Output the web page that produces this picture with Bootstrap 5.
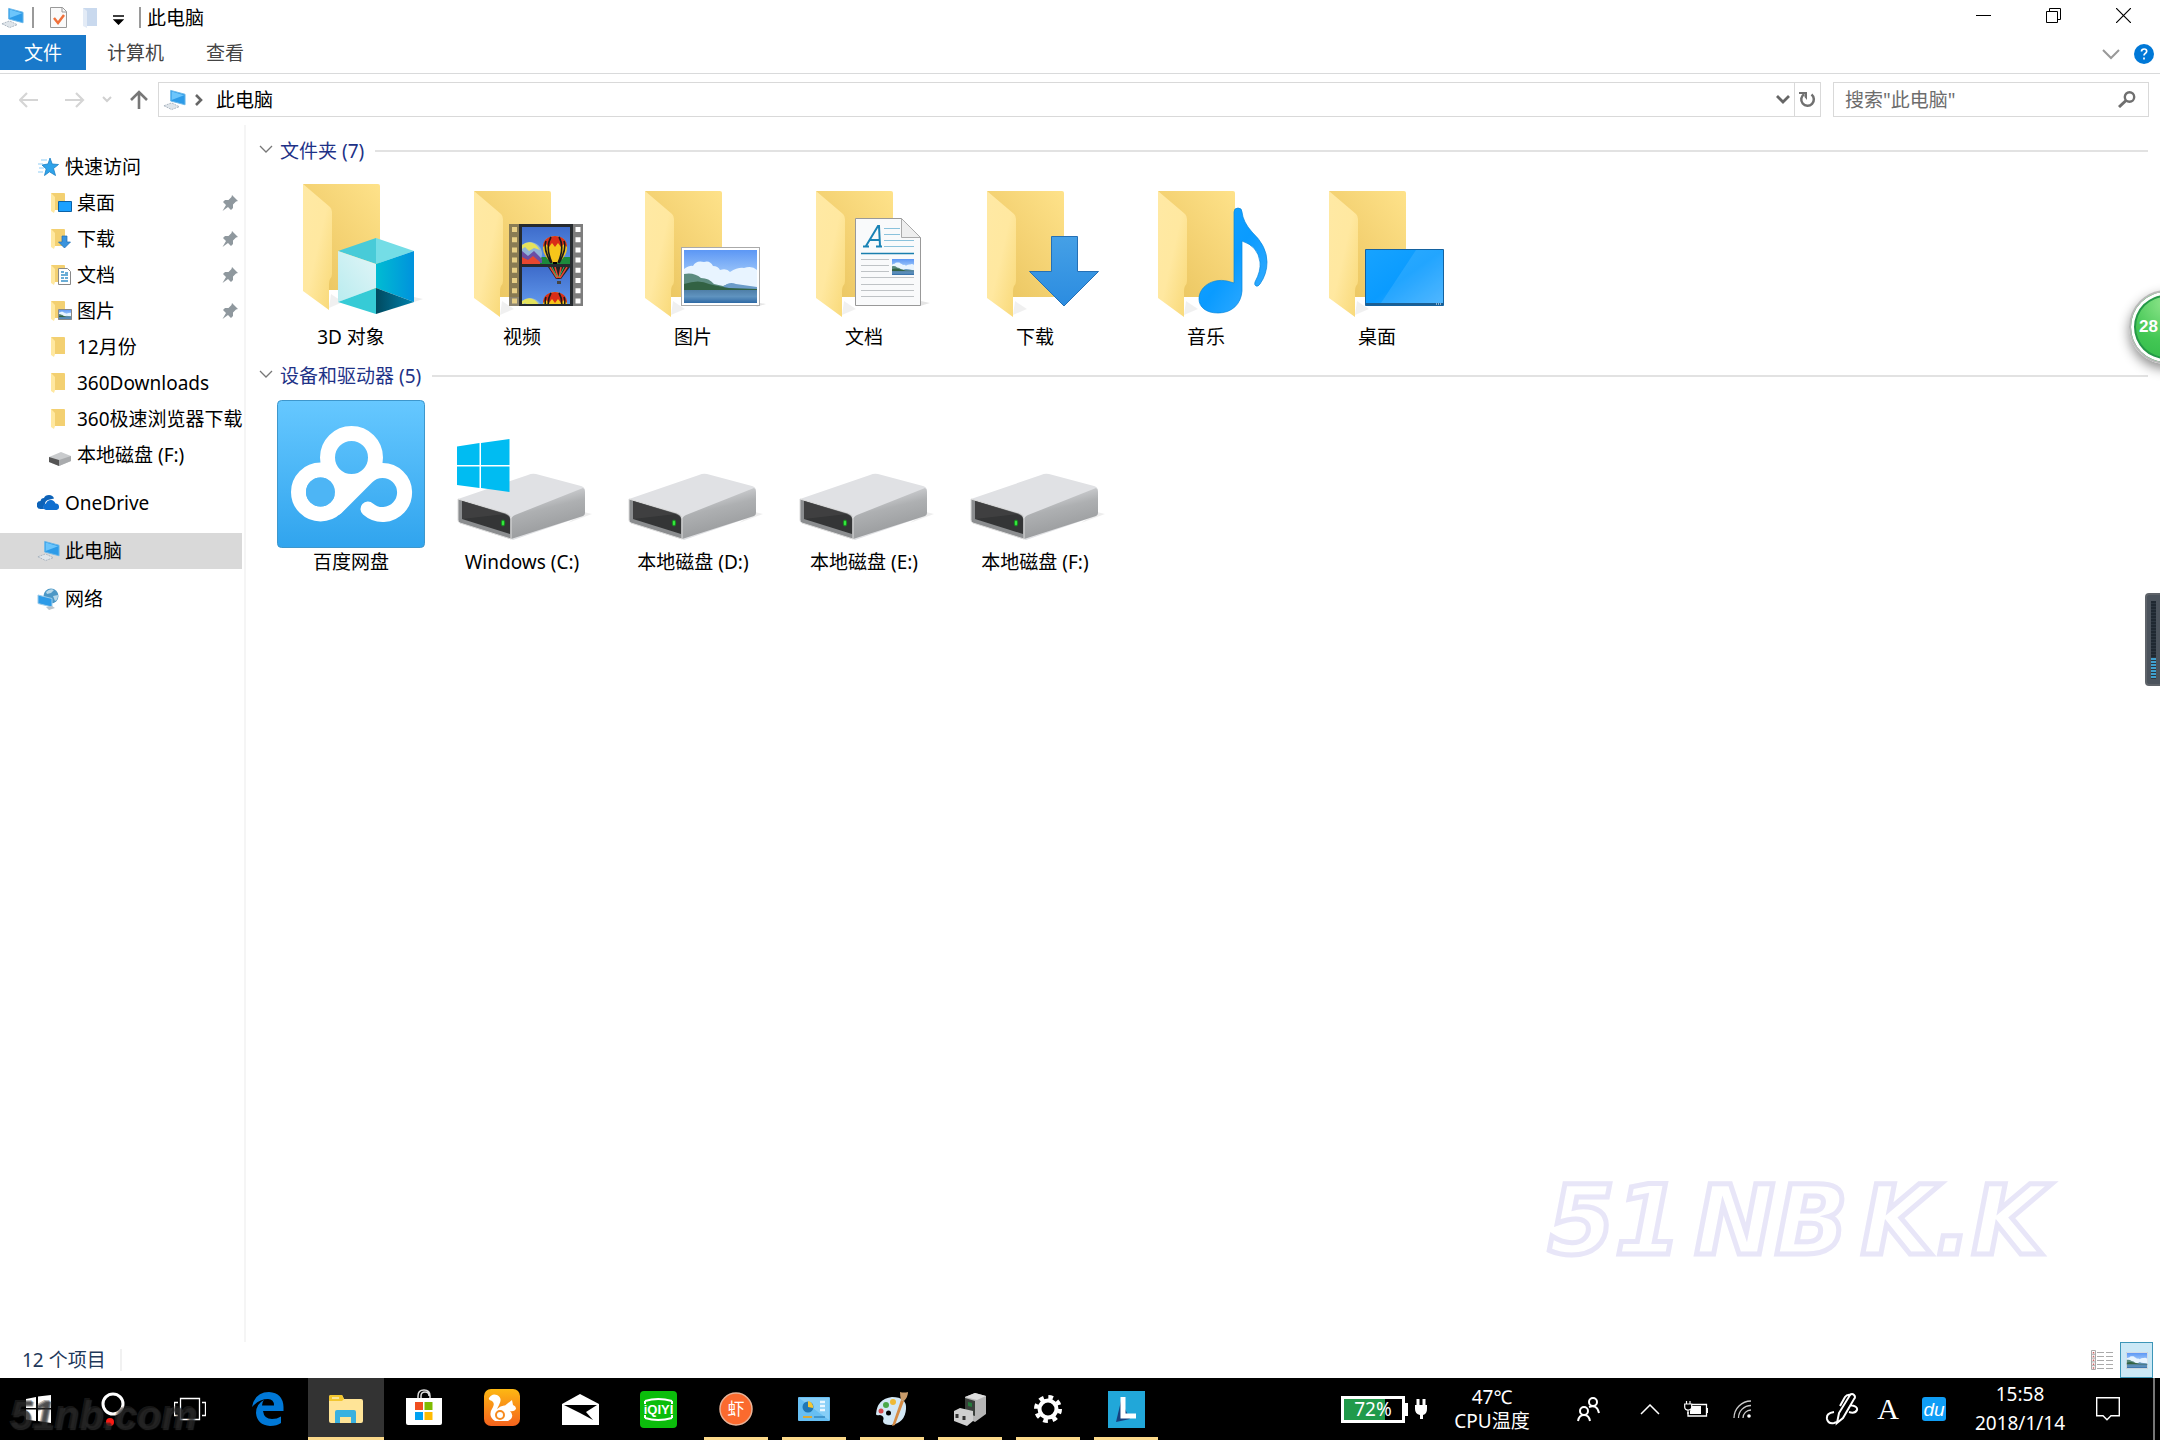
<!DOCTYPE html>
<html lang="zh-CN">
<head>
<meta charset="utf-8">
<meta name="viewport" content="width=device-width, initial-scale=1">
<title>此电脑</title>
<link href="https://cdn.jsdelivr.net/npm/bootstrap@5.3.0/dist/css/bootstrap.min.css" rel="stylesheet">
<style>
body{font-family:"Noto Sans","Noto Sans CJK SC",sans-serif;font-size:19px;line-height:28px;color:#000;background:#fff;overflow:hidden}
button,input{font:inherit;color:inherit;background:none;border:0;padding:0;border-radius:0}
a{color:inherit;text-decoration:none}
svg{display:block;flex:none}
.shell{min-height:100vh}
.titlebar{height:35px;padding-left:1px}
.quick{margin-left:15px}
.vbar{width:2px;height:21px;background:#9a9a9a}
.title-gap{margin-right:6px}
.winbtn{width:70px;height:32px;display:flex;align-items:center;justify-content:center}
.winctl{margin-right:2px}
.ribbon{height:39px;border-bottom:1px solid #d9dadb;color:#444}
.tab-file{width:86px;height:35px;background:#1979ca;color:#fff}
.tab-item{height:35px;padding:0 21px}
.ribbon-end{gap:14px;padding-right:6px}
.addr-row{padding:8px 11px 0 19px}
.go-up{margin-right:9px}
.addr-box{height:35px;border:1px solid #d9d9d9}
.search-box{width:316px;height:35px;border:1px solid #d9d9d9;margin-left:12px;padding:0 12px 0 11px;color:#6d6d6d}
.search-box input{outline:0;min-width:0}
.search-box input::placeholder{color:#6d6d6d;opacity:1}
.refresh{width:26px;height:33px;border-left:1px solid #d9d9d9}
.side{width:242px;padding-top:32px}
.side a{height:36px;display:flex;align-items:center;padding-left:37px;gap:5px;white-space:nowrap}
.side .sub{padding-left:49px;gap:4px}
.side .group-start{margin-top:12px}
.side .current{background:#d9d9d9}
.split{width:2px;background:#f5f5f5;margin:8px 12px 0 2px}
.group-head{height:36px;color:#1e3287;gap:7px;padding-left:1px}
.group-head hr{height:2px;background:#e2e2e2;border:0;opacity:1;margin:0 0 0 4px}
.tiles{gap:23px;margin:6px 0 7px 19px}
.tile{width:148px;display:block;text-align:center;white-space:nowrap}
.statusbar{height:36px;padding:0 7px 0 22px;color:#1e395b;gap:6px}
.stat-sep{width:2px;height:22px;background:#f1f1f1;margin-left:8px}
.view-on{width:33px;height:36px;background:#cbe8f6;border:1px solid #3d96b8;display:flex;align-items:center;justify-content:center}
.taskbar{height:62px;background:#000;color:#fff}
.pins{gap:2px;margin-left:2px}
.tb{width:76px;height:62px;display:flex;align-items:center;justify-content:center;position:relative}
.tb.on{background:#333}
.tb.run::after{content:"";position:absolute;left:6px;right:6px;bottom:0;height:3px;background:#fbd98a}
.tb.on::after{left:0;right:0}
.tray{width:46px;height:62px;display:flex;align-items:center;justify-content:center}
.tray-mid{margin:0 54px 0 16px}
.tray-note{width:50px;margin-right:20px}
.ime{font:30px/62px "Liberation Serif",serif}
.cpu{width:110px;line-height:24px;text-align:center;margin-right:18px}
.clock{width:126px;line-height:29px;text-align:center}
.peek{width:7px;height:62px;border-left:2px solid #777}
.batt{width:64px;height:27px;border:3px solid #fff;position:relative;line-height:21px;text-align:center;background:linear-gradient(90deg,#219a4b 70%,#000 70%)}
.batt::after{content:"";position:absolute;right:-6px;top:4px;width:3px;height:13px;background:#fff}
.float-ball{position:absolute;right:-43px;top:290px;width:74px;height:74px;border-radius:50%;border:2px solid #b9b9b9;background:radial-gradient(circle at 50% 15%,#8fe58c,#43c754 55%,#2fb848);box-shadow:inset 0 0 0 3px #fff,inset 0 0 0 5px #249848,0 5px 12px rgba(0,0,0,.45);color:#fff;font:bold 17px/70px "Liberation Sans",sans-serif;text-align:left;padding-left:8px}
.float-meter{position:absolute;right:0;top:593px;width:15px;height:93px;border-radius:4px 0 0 4px;background:#4b535c;border:2px solid #5e6369;border-right:0}
.float-meter::before{content:"";position:absolute;left:4px;top:6px;width:5px;height:78px;background:repeating-linear-gradient(#1f2831 0 2px,#2c3640 2px 3px)}
.float-meter::after{content:"";position:absolute;left:4px;bottom:5px;width:5px;height:21px;background:repeating-linear-gradient(#3fa0cf 0 2px,#2c3640 2px 3px)}
.wall-mark{position:absolute;right:114px;bottom:164px;width:498px;font:italic bold 96px/110px "DejaVu Sans",sans-serif;color:#fff;-webkit-text-stroke:5px #e8e6f8;pointer-events:none}
.corner-mark{position:absolute;left:10px;bottom:4px;font:italic bold 40px/42px "Liberation Sans",sans-serif;color:rgba(20,20,20,.35);text-shadow:1px 1px 1px rgba(60,60,60,.6),-1px -1px 0 rgba(60,60,60,.4);pointer-events:none}
</style>
<script src="https://cdn.jsdelivr.net/npm/bootstrap@5.3.0/dist/js/bootstrap.bundle.min.js"></script>
</head>
<body>
<svg width="0" height="0" class="position-absolute" aria-hidden="true">
<defs>
<linearGradient id="gBack" x1="0" y1="1" x2="1" y2="0"><stop offset="0" stop-color="#e8c35c"/><stop offset=".5" stop-color="#f4d273"/><stop offset="1" stop-color="#fee28a"/></linearGradient>
<linearGradient id="gFlap" x1="0" y1="0" x2="1" y2="1"><stop offset="0" stop-color="#ffe9a4"/><stop offset=".5" stop-color="#ffe8a0"/><stop offset="1" stop-color="#f8d876"/></linearGradient>
<linearGradient id="gSky" x1="0" y1="0" x2="0" y2="1"><stop offset="0" stop-color="#5c97f5"/><stop offset="1" stop-color="#c7e5fc"/></linearGradient>
<linearGradient id="gSea" x1="0" y1="0" x2="0" y2="1"><stop offset="0" stop-color="#4f7fa8"/><stop offset=".5" stop-color="#5f93bf"/><stop offset="1" stop-color="#2f6aa5"/></linearGradient>
<linearGradient id="gBlue" x1="0" y1="0" x2="1" y2="1"><stop offset="0" stop-color="#17a3ff"/><stop offset=".5" stop-color="#0a9bff"/><stop offset="1" stop-color="#3fb0ff"/></linearGradient>
<linearGradient id="gPan" x1="0" y1="0" x2="0" y2="1"><stop offset="0" stop-color="#66c8ff"/><stop offset="1" stop-color="#30a4ee"/></linearGradient>
<linearGradient id="gCubeR" x1="0" y1="0" x2="1" y2="0"><stop offset="0" stop-color="#00bcd2"/><stop offset="1" stop-color="#0092dd"/></linearGradient>
<linearGradient id="gCubeL" x1="0" y1="1" x2="1" y2="0"><stop offset="0" stop-color="#b9ecef"/><stop offset="1" stop-color="#e2f5f7"/></linearGradient>
<linearGradient id="gCubeB" x1="0" y1="0" x2="1" y2="0"><stop offset="0" stop-color="#00495f"/><stop offset="1" stop-color="#0082ad"/></linearGradient>
<linearGradient id="gSide" x1="0" y1="0" x2=".35" y2="1"><stop offset=".1" stop-color="#e0e1e4"/><stop offset=".5" stop-color="#aeb0b2"/><stop offset="1" stop-color="#97999b"/></linearGradient>
<linearGradient id="gArrow" x1="0" y1="0" x2="0" y2="1"><stop offset="0" stop-color="#45a0e6"/><stop offset="1" stop-color="#2b8ce0"/></linearGradient>
<linearGradient id="gFilm" x1="0" y1="0" x2="0" y2="1"><stop offset="0" stop-color="#3e6ccb"/><stop offset="1" stop-color="#5f96ea"/></linearGradient>
<linearGradient id="gUc" x1="0" y1="0" x2="0" y2="1"><stop offset="0" stop-color="#fdb813"/><stop offset="1" stop-color="#f5621d"/></linearGradient>
<symbol id="folder" viewBox="0 0 148 148"><path d="M52 140l14-6-12-8z" fill="#000" opacity=".06"/><path d="M26 16h75q2 0 2 2v104H52z" fill="url(#gBack)"/><path d="M26 16l27 23q2 2 2 5v62q0 3-2 5-1 2-1 5v26L26 123z" fill="url(#gFlap)"/></symbol>
<symbol id="sfolder" viewBox="0 0 22 22"><path d="M2 1h13q1 0 1 1v16H5z" fill="#f3d071"/><path d="M2 1l4 4v13l-1 3-3-2z" fill="#ffe8a0"/></symbol>
<symbol id="pc" viewBox="0 0 24 22"><path d="M8 1l15 4v11L8 12z" fill="#2d9be8" stroke="#6bb7e8"/><path d="M9 2l13 4L9 11z" fill="#6cc5fb"/><path d="M1 17l8-3 8 4-8 3z" fill="#dfe5ea" stroke="#a9b4bf" stroke-dasharray="2 1"/></symbol>
<symbol id="drive" viewBox="0 0 148 148"><path d="M136 112l8 2-24 9z" fill="#000" opacity=".07"/><path d="M10 99L80 75q4-2 8-1l45 12q4 1 4 5v22q0 2-2 3l-70 24-3-1-49-16q-3-1-3-3z" fill="#e0e1e4"/><path d="M63 139v-19q0-3 4-5l68-27q2 1 2 4v21q0 2-2 3z" fill="url(#gSide)"/><path d="M10 99l48 14q5 2 5 6v20L12 123q-2-1-2-3z" fill="#8b8d8f" stroke="#ddd" stroke-width="1"/><path d="M14 101l43 13q5 2 5 5v15L14 119z" fill="#343536"/><path d="M14 101l43 13-43 5z" fill="#454545" opacity=".7"/><ellipse cx="55" cy="123" rx="1.700" ry="3" fill="#35e83e" stroke="#178b1e"/></symbol>
<symbol id="pin" viewBox="0 0 16 16"><path d="M10 0l6 6-2 .5-3 3v3.500L9 15 6 12l-5.500 4L4 10 1 7l2-2h3.500l3-3z" fill="#8f989e"/></symbol>
<symbol id="chev" viewBox="0 0 14 8"><path d="M1 1l6 6 6-6" fill="none" stroke="#777" stroke-width="1.300"/></symbol>
<symbol id="scene" viewBox="0 0 79 59" preserveAspectRatio="none"><rect x=".5" y=".5" width="78" height="58" fill="#fff" stroke="#aaa"/><path d="M3 3h73v40H3z" fill="url(#gSky)"/><path d="M3 42V22q6-4 9-3 3-6 11-4 6-2 9 4 5 0 7 4 7-2 10 2 8-5 14-4 8-3 13 2v19z" fill="#e8f4ff"/><path d="M3 42V27q10-2 17 4 8 0 13 6l9 2q8-4 14 0 8-1 20 3v1z" fill="#5b8b7f"/><path d="M42 40q6-6 13-3l21 3v3H42z" fill="#6c9cc9"/><path d="M3 43V37q15-5 25 0 8 2 20 4l28 1v2H3z" fill="#326243"/><path d="M3 43h73v13H3z" fill="url(#gSea)"/></symbol>
</defs>
</svg>

<div class="shell d-flex flex-column position-relative overflow-hidden">
<header>
<div class="titlebar d-flex align-items-center">
<svg width="23" height="22"><use href="#pc"/></svg>
<span class="vbar ms-2"></span>
<button class="quick" aria-label="属性"><svg width="19" height="23" viewBox="0 0 19 23"><path d="M1.500 1.500h12l4 4v16h-16z" fill="#fafafa" stroke="#999"/><path d="M13 1.500V6h4.500" fill="none" stroke="#999"/><path d="M5 12l4 5 6-8" fill="none" stroke="#f0703a" stroke-width="2.500"/></svg></button>
<button class="quick" aria-label="新建文件夹"><svg width="15" height="22" viewBox="0 0 15 22"><path d="M0 1h14v18H3z" fill="#c9d9ee"/><path d="M0 1l4 3v17l-4-2z" fill="#e3ebf6"/></svg></button>
<button class="quick" aria-label="自定义快速访问工具栏"><svg class="mt-1" width="11" height="10" viewBox="0 0 11 10"><path d="M0 1h11M1.500 5h8L5.500 9z" fill="#000" stroke="#000" stroke-width="1.500"/></svg></button>
<span class="vbar quick title-gap"></span>
<span>此电脑</span>
<div class="winctl d-flex ms-auto mb-1">
<button class="winbtn" aria-label="最小化"><svg width="15" height="15"><path d="M0 7.500h15" stroke="#000"/></svg></button>
<button class="winbtn" aria-label="还原"><svg width="15" height="15" fill="none" stroke="#000"><path d="M.5 3.500h11v11H.5zM3.500 3.500v-3h11v11h-3"/></svg></button>
<button class="winbtn" aria-label="关闭"><svg width="15" height="15"><path d="M0 0l15 15M15 0L0 15" stroke="#000" stroke-width="1.200"/></svg></button>
</div>
</div>
<nav class="ribbon d-flex align-items-start">
<button class="tab-file">文件</button>
<button class="tab-item">计算机</button>
<button class="tab-item">查看</button>
<div class="ribbon-end d-flex align-items-center ms-auto h-100">
<button aria-label="展开功能区"><svg width="18" height="11" viewBox="0 0 18 11"><path d="M1 1l8 8 8-8" fill="none" stroke="#999" stroke-width="2"/></svg></button>
<button aria-label="帮助"><svg width="20" height="20" viewBox="0 0 20 20"><circle cx="10" cy="10" r="10" fill="#0078d7"/><path d="M7.500 7.500q0-2.500 2.700-2.500 2.500 0 2.500 2.300 0 1.300-1.500 2.200-1.200.8-1.200 2M10 13.500v2" fill="none" stroke="#fff" stroke-width="1.700"/></svg></button>
</div>
</nav>
<div class="addr-row d-flex align-items-center">
<button aria-label="后退"><svg width="20" height="16" viewBox="0 0 20 16"><path d="M19 8H2M8 1L1 8l7 7" fill="none" stroke="#d5d5d5" stroke-width="2.200"/></svg></button>
<button class="ms-4" aria-label="前进"><svg width="22" height="16" viewBox="0 0 22 16"><path d="M2 8h17M13 1l7 7-7 7" fill="none" stroke="#d5d5d5" stroke-width="2.200"/></svg></button>
<button class="ms-3 me-3" aria-label="最近位置"><svg width="12" height="8" viewBox="0 0 12 8"><path d="M2 1l4 4 4-4" fill="none" stroke="#d0d0d0" stroke-width="2"/></svg></button>
<button class="go-up" aria-label="上移"><svg width="20" height="20" viewBox="0 0 20 20"><path d="M10 19V3M2 10l8-8 8 8" fill="none" stroke="#777" stroke-width="2.600"/></svg></button>
<div class="addr-box d-flex align-items-center flex-grow-1 ps-1">
<svg width="23" height="22"><use href="#pc"/></svg>
<svg class="mx-2" width="10" height="12" viewBox="0 0 10 12"><path d="M2 1l5 5-5 5" fill="none" stroke="#666" stroke-width="2.600"/></svg>
<a href="#" class="ms-1">此电脑</a>
<button class="ms-auto me-1" aria-label="以前的位置"><svg width="14" height="10" viewBox="0 0 14 10"><path d="M1 1l6 6 6-6" fill="none" stroke="#666" stroke-width="2.800"/></svg></button>
<button class="refresh d-flex align-items-center justify-content-center" aria-label="刷新"><svg width="17" height="17" viewBox="0 0 17 17"><path d="M5 3.200a6.300 6.300 0 1 0 7.500.3" fill="none" stroke="#707070" stroke-width="2.500"/><path d="M0 1h8v8L5.500 6V3H0z" fill="#707070"/></svg></button>
</div>
<div class="search-box d-flex align-items-center">
<input class="flex-grow-1" type="search" aria-label="搜索" placeholder="搜索&quot;此电脑&quot;">
<svg width="18" height="17" viewBox="0 0 18 17"><circle cx="11.500" cy="6" r="4.700" fill="none" stroke="#6f6f6f" stroke-width="2.400"/><path d="M8 9.500L1 16" stroke="#6f6f6f" stroke-width="3"/></svg>
</div>
</div>
</header>

<main class="d-flex flex-grow-1">
<nav class="side flex-shrink-0">
<a href="#"><svg width="23" height="22" viewBox="0 0 23 22"><path d="M13 2l2.200 6 6.300.500-5 4 2 7-6-3.700-5 3.700 1.700-6.500L5 9l6-1z" fill="#2fa3ea" stroke="#1b7fc4" stroke-width=".8"/><path d="M4 4h6M1 8h5M2 12h5M1 16h5" stroke="#8fcdf5"/></svg><span>快速访问</span></a>
<a href="#" class="sub"><svg width="24" height="22" viewBox="0 0 24 22"><use href="#sfolder" width="22" height="22"/><path d="M9.500 9.500h13v10h-13z" fill="#1ba1ff" stroke="#0b62a8"/></svg><span>桌面</span><svg class="ms-auto me-1" width="16" height="16"><use href="#pin"/></svg></a>
<a href="#" class="sub"><svg width="24" height="22" viewBox="0 0 24 22"><use href="#sfolder" width="22" height="22"/><path d="M13 8h5v6h3.500l-6 6-6-6H13z" fill="#3a93dd" stroke="#1f6fb5" stroke-width=".7"/></svg><span>下载</span><svg class="ms-auto me-1" width="16" height="16"><use href="#pin"/></svg></a>
<a href="#" class="sub"><svg width="24" height="22" viewBox="0 0 24 22"><use href="#sfolder" width="22" height="22"/><path d="M9.500 4.500h9l3 3v13h-12z" fill="#fff" stroke="#888"/><path d="M12 8h3M16 9h3M12 11h7M12 14h3M12 17h7M16 14h3" stroke="#3a93c9" stroke-width="1.300"/></svg><span>文档</span><svg class="ms-auto me-1" width="16" height="16"><use href="#pin"/></svg></a>
<a href="#" class="sub"><svg width="24" height="22" viewBox="0 0 24 22"><use href="#sfolder" width="22" height="22"/><svg x="9" y="9" width="14" height="11"><use href="#scene"/></svg><path d="M9.500 9.500h13v10h-13z" fill="none" stroke="#888"/></svg><span>图片</span><svg class="ms-auto me-1" width="16" height="16"><use href="#pin"/></svg></a>
<a href="#" class="sub"><svg width="24" height="22"><use href="#sfolder" width="22" height="22"/></svg><span>12月份</span></a>
<a href="#" class="sub"><svg width="24" height="22"><use href="#sfolder" width="22" height="22"/></svg><span>360Downloads</span></a>
<a href="#" class="sub"><svg width="24" height="22"><use href="#sfolder" width="22" height="22"/></svg><span>360极速浏览器下载</span></a>
<a href="#" class="sub"><svg width="24" height="22" viewBox="0 0 24 22"><path d="M0 13l12-5 10 4v5l-12 5-10-4z" fill="#c9cbcd"/><path d="M0 13l10 3v6L0 18z" fill="#555"/><path d="M10 16l12-4v5l-12 5z" fill="#a9abad"/></svg><span>本地磁盘 (F:)</span></a>
<a href="#" class="group-start"><svg width="23" height="22" viewBox="0 0 23 22"><path d="M7 17H4a4 4 0 0 1-.5-8Q4 6 7 6q1-3 5-3 4 0 5 3.500l-4 1Q8 8 8 12q-2 2-1 5z" fill="#0c62b8"/><path d="M9 18a3.300 3.300 0 0 1 0-6.500Q10 8 14 8q3 0 4.500 3.500a3.300 3.300 0 0 1 1 6.500z" fill="#0f6fd0"/></svg><span>OneDrive</span></a>
<a href="#" class="group-start current"><svg width="23" height="22"><use href="#pc"/></svg><span>此电脑</span></a>
<a href="#" class="group-start"><svg width="23" height="22" viewBox="0 0 23 22"><circle cx="14" cy="8" r="7.500" fill="#4b97c6"/><path d="M9 4q4-4 8-2l-3 3-4 1zM16 8l5-1q0 5-3 6z" fill="#b5d7e9"/><path d="M1 7l14 3.500V19L1 15.500z" fill="#2d9be8" stroke="#9acbea"/><path d="M9 19l6-1 3 2-6 2z" fill="#b9c4cc"/></svg><span>网络</span></a>
</nav>
<div class="split"></div>
<section class="flex-grow-1 pt-3">
<div class="group-head d-flex align-items-center me-2 pe-1"><svg class="mb-1" width="14" height="8"><use href="#chev"/></svg><span>文件夹 (7)</span><hr class="flex-grow-1"></div>
<div class="tiles d-flex flex-wrap">
<a href="#" class="tile"><svg width="148" height="148" viewBox="0 0 148 148"><use href="#folder" y="-7" width="148" height="148"/><path d="M137 122l9 2-30 10z" opacity=".08"/><path d="M99 63v26L61 76z" fill="#48cbd8"/><path d="M99 63l38 13-38 13z" fill="#74dde6"/><path d="M61 76l38 13v24l-38 14z" fill="url(#gCubeL)"/><path d="M137 76L99 89v24l38 14z" fill="url(#gCubeR)"/><path d="M61 127l38-14v26z" fill="#36cbd6"/><path d="M137 127l-38-14v26z" fill="url(#gCubeB)"/></svg>3D 对象</a>
<a href="#" class="tile"><svg width="148" height="148" viewBox="0 0 148 148"><use href="#folder" width="148" height="148"/>
<path d="M61 49h10v82H61z" fill="#6e654c" opacity=".8"/><path d="M125 49h10v82h-10z" fill="#7d7d7d"/><path d="M71 49h54v82H71z" fill="#262a2e"/><path d="M66.500 52v78" stroke="#e8cf85" stroke-width="5" stroke-dasharray="5 5.200"/><path d="M130 52v78" stroke="#fff" stroke-width="5" stroke-dasharray="5 5.200"/>
<svg x="74" y="52" width="48" height="37" viewBox="0 0 48 37" overflow="hidden"><path d="M0 0h48v37H0z" fill="url(#gFilm)"/><path d="M16 30h32v7H16z" fill="#1c8a3c"/><g id="balloons"><circle cx="8" cy="27" r="12" fill="#8fb4d8"/><path d="M0 18q8-6 15 1l3 4-6-2-5 3-4-4-3 2z" fill="#e4e25c"/><path d="M0 24l6 5 6-5 8 8v4H0z" fill="#6a4fa5"/><path d="M0 30l6 3 5-4 7 6v5H0z" fill="#e8472f"/><path d="M33 9q12 1 12 12 0 8-9 15h-6q-9-7-9-15Q21 10 33 9z" fill="#f6c51b"/><path d="M33 9q-12 1-12 11l3-3 3 3 3-4 3 4 3-4 3 4 3-3 3 3Q45 10 33 9z" fill="#d92d18"/><path d="M29 10q-6 10 1 26M37 10q6 10-1 26M24 14q-3 8 5 22M42 14q3 8-5 22" stroke="#1b1b1b" stroke-width="1.600" fill="none"/><path d="M31 35h4v3h-4z"/></g></svg>
<svg x="74" y="92" width="48" height="37" viewBox="0 0 48 37" overflow="hidden"><path d="M0 0h48v37H0z" fill="url(#gFilm)"/><path d="M26 0h22l-9 12h-5z" fill="#222"/><path d="M28 0l7 11M33 0l3 11M39 0l-2 11M45 0l-7 11" stroke="#e8472f" stroke-width="1.500"/><path d="M30 0l5 10M42 0l-5 10" stroke="#36c26e"/><path d="M35 14h4v3h-4z" fill="#444"/><use href="#balloons" y="16"/></svg>
</svg>视频</a>
<a href="#" class="tile"><svg width="148" height="148" viewBox="0 0 148 148"><use href="#folder" width="148" height="148"/><path d="M141 128l6 1-10 3z" opacity=".1"/><use href="#scene" x="62" y="72" width="79" height="59"/></svg>图片</a>
<a href="#" class="tile"><svg width="148" height="148" viewBox="0 0 148 148"><use href="#folder" width="148" height="148"/><path d="M131 126l9 2-10 3z" opacity=".1"/><path d="M65.500 43.500h46l19 19v68h-65z" fill="#f9fafb" stroke="#999"/><path d="M111.500 43.500v19h19z" fill="#eee" stroke="#aaa"/><path d="M76 71l12-20h1l1 20M80 65h9M73 71.500h6M86 71.500h6" fill="none" stroke="#1a83b5" stroke-width="2"/><path d="M94 53.500h16M94 59.500h16M94 65.500h30M94 71.500h30" stroke="#8ac2dc" stroke-width="1.200"/><path d="M71 78.500h53" stroke="#1a7fae" stroke-width="1.500"/><path d="M71 84.500h28M71 90.500h28M71 96.500h28M71 102.500h53M71 109.500h53M71 115.500h53M71 121.500h53" stroke="#bfc3c6"/><svg x="102" y="84" width="22" height="16" viewBox="3 3 73 53" preserveAspectRatio="none"><use href="#scene" width="79" height="59"/></svg></svg>文档</a>
<a href="#" class="tile"><svg width="148" height="148" viewBox="0 0 148 148"><use href="#folder" width="148" height="148"/><path d="M90.500 61.500h26v35h21L103 131 68.500 96.500h22z" fill="url(#gArrow)" stroke="#2570b5"/></svg>下载</a>
<a href="#" class="tile"><svg width="148" height="148" viewBox="0 0 148 148"><use href="#folder" width="148" height="148"/><path d="M102 37q0-4 4-4t4 4q1 10 10 20 15 14 15 30 0 12-7 22-2 3-4 2t-1-4q6-11 5-20-2-16-18-21v50c-1 13-10 22-24 22-12 0-19-6-19-14 0-12 13-21 28-18l7 2z" fill="url(#gBlue)" stroke="#0787dd" stroke-width=".7"/></svg>音乐</a>
<a href="#" class="tile"><svg width="148" height="148" viewBox="0 0 148 148"><use href="#folder" width="148" height="148"/><path d="M62.500 74.500h78v56h-78z" fill="url(#gBlue)" stroke="#1462a0"/><path d="M113 75h27v53H78z" fill="#fff" opacity=".1"/><path d="M63 128h77v2H63z" fill="#1b5f93"/><path d="M133 129h6" stroke="#fff" stroke-dasharray="1 1"/></svg>桌面</a>
</div>
<div class="group-head d-flex align-items-center me-2 pe-1"><svg class="mb-1" width="14" height="8"><use href="#chev"/></svg><span>设备和驱动器 (5)</span><hr class="flex-grow-1"></div>
<div class="tiles d-flex flex-wrap">
<a href="#" class="tile"><svg width="148" height="148" viewBox="0 0 148 148"><rect x=".5" y=".5" width="147" height="147" rx="4" fill="url(#gPan)" stroke="#3e97cc"/><g fill="none" stroke="#fff" stroke-width="15"><circle cx="74.500" cy="57.500" r="24"/><circle cx="43.500" cy="92" r="22"/><path d="M59 108l31-31a22 22 0 1 1 1 32" stroke-linecap="round"/></g><path d="M52 72l22 12 22-12-4 11-24 25-10-10z" fill="#fff"/><circle cx="43.500" cy="92" r="14.500" fill="#4db5f5"/></svg>百度网盘</a>
<a href="#" class="tile"><svg width="148" height="148" viewBox="0 0 148 148"><use href="#drive" width="148" height="148"/><path d="M9 42.500L31.500 43v22H9z" fill="none"/><path d="M9 46.500L31.500 43v22H9zM33 43l28.500-4v26H33zM9 66.500h22.500V88L9 85zM33 66.500h28.500V92L33 88z" fill="#00bcf2"/></svg>Windows (C:)</a>
<a href="#" class="tile"><svg width="148" height="148"><use href="#drive"/></svg>本地磁盘 (D:)</a>
<a href="#" class="tile"><svg width="148" height="148"><use href="#drive"/></svg>本地磁盘 (E:)</a>
<a href="#" class="tile"><svg width="148" height="148"><use href="#drive"/></svg>本地磁盘 (F:)</a>
</div>
</section>
</main>

<div class="statusbar d-flex align-items-center">
<span>12 个项目</span><span class="stat-sep"></span>
<button class="ms-auto" aria-label="详细信息"><svg width="24" height="22" viewBox="0 0 24 22"><path d="M1.500 1.500h4v19h-4zM1.500 5.300h4M1.500 9.100h4M1.500 12.900h4M1.500 16.700h4" fill="#fff" stroke="#aaa"/><path d="M3.500 3v17" stroke="#c66" stroke-dasharray="1.500 2.300" stroke-width="1.500"/><path d="M7 3.500h16M7 7.500h16M7 11.500h16M7 15.500h16M7 19.500h16" stroke="#aaa" stroke-dasharray="7 2"/></svg></button>
<button class="view-on" aria-label="大图标"><svg width="22" height="17"><use href="#scene"/></svg></button>
</div>

<footer class="taskbar d-flex align-items-center">
<button class="tb" aria-label="开始"><svg width="25" height="28" viewBox="0 0 25 28"><path d="M0 4l10-2v11H0zM12 1.500L25 0v13H12zM0 14.500h10V26L0 24.500zM12 14.500h13V28l-13-2z" fill="#fff"/></svg></button>
<button class="tb" aria-label="小娜"><svg width="26" height="34" viewBox="0 0 26 34"><circle cx="12" cy="12" r="10" fill="none" stroke="#fff" stroke-width="3"/><circle cx="9" cy="30" r="4" fill="#fb1a14"/></svg></button>
<button class="tb" aria-label="任务视图"><svg width="32" height="24" viewBox="0 0 32 24"><path d="M6.500 1.500h19v21h-19zM4 5.500H.5v13H4M28 5.500h3.500v13H28" fill="none" stroke="#fff" stroke-width="1.300"/></svg></button>
<div class="pins d-flex">
<button class="tb" aria-label="Edge"><svg width="32" height="34" viewBox="0 0 32 34"><path d="M0 15Q3 0 17 0q14 1 14.500 15v4H11q1 8 9 8 5 0 9-2.500V31q-4 3-11 3Q5 33 4 21q0-9 8-13-2 2-2 5.500h12Q22 7 16 7 7 7 0 15z" fill="#0078d7"/></svg></button>
<button class="tb on run" aria-label="文件资源管理器"><svg width="34" height="28" viewBox="0 0 34 28"><path d="M0 2q0-2 2-2h11l2 4h17q2 0 2 2v20q0 2-2 2H2q-2 0-2-2z" fill="#ffe497"/><path d="M0 5V2q0-2 2-2h11l2 4-2 2H0z" fill="#f2c62e"/><path d="M3 3h7" stroke="#fff"/><path d="M6 28V17q0-2 2-2h17q2 0 2 2v11h-5v-6H11v6z" fill="#39b1e0"/></svg></button>
<button class="tb" aria-label="应用商店"><svg class="mb-1" width="36" height="36" viewBox="0 0 36 36"><path d="M12 10V7q0-6 6-6t6 6v3M15 10V7q0-4 4-4t4 4" fill="none" stroke="#ddd" stroke-width="1.500"/><path d="M0 9h36v25q0 2-2 2H2q-2 0-2-2z" fill="#fff"/><path d="M9 13h8v8H9z" fill="#f04e1f"/><path d="M18.500 13h8v8h-8z" fill="#7fba00"/><path d="M9 23h8v8H9z" fill="#00a1f1"/><path d="M18.500 23h8v8h-8z" fill="#ffbb00"/></svg></button>
<button class="tb" aria-label="UC浏览器"><svg class="mb-1" width="36" height="37" viewBox="0 0 36 37"><rect width="36" height="37" rx="7" fill="url(#gUc)"/><path d="M11 32q-8-5-2-14 2-4-1-6-4-1-3-3 3-5 8-3 6 3 2 10l-2 4q4-4 8-3.500l7-5.500 1 5q3 1 3 4-2 3-6 2 4 4 1 8l-3 2z" fill="#fff"/><circle cx="16" cy="26" r="4" fill="#fff" stroke="#f68a1f" stroke-width="2"/></svg></button>
<button class="tb" aria-label="邮件"><svg width="37" height="31" viewBox="0 0 37 31"><path d="M0 10L18 0l19 10v21H0z" fill="#fff"/><path d="M2 11h33L24 18l7 8-13-7z" fill="#000"/></svg></button>
<button class="tb" aria-label="爱奇艺"><svg width="37" height="37" viewBox="0 0 37 37"><rect width="37" height="37" rx="4" fill="#0bbd0b"/><path d="M5 10q13-4 27 0M5 27q13 4 27 0M5 10v3M32 10v3M5 27v-3M32 27v-3" fill="none" stroke="#fff" stroke-width="2"/><text x="18.500" y="23" text-anchor="middle" font-family="Liberation Sans" font-weight="bold" font-size="13" fill="#fff">iQIYI</text></svg></button>
<button class="tb run" aria-label="虾"><svg width="34" height="34" viewBox="0 0 34 34"><circle cx="17" cy="17" r="16" fill="#fb6a2e" stroke="#e8b398" stroke-width="1.500"/><text x="17" y="23" text-anchor="middle" font-family="Noto Sans CJK SC" font-size="17" fill="#fff">虾</text></svg></button>
<button class="tb run" aria-label="控制面板"><svg width="32" height="24" viewBox="0 0 32 24"><rect width="32" height="24" rx="1" fill="#67bff3"/><path d="M1 1h30v22z" fill="#9bd8fa" opacity=".6"/><circle cx="10" cy="10" r="5.500" fill="#2077b5"/><path d="M10 10V4a6 6 0 0 1 5 7z" fill="#f5c733"/><path d="M22 5h5M22 9h5M22 13h5" stroke="#eaf7ff" stroke-width="2.500"/><path d="M5 20h9" stroke="#d8a93a" stroke-width="2"/><path d="M16 20h11" stroke="#1d6ca6"/></svg></button>
<button class="tb run" aria-label="画图"><svg width="34" height="36" viewBox="0 0 34 36"><path d="M1 23Q2 8 17 6q15 0 14 12-1 14-15 16-8 0-8-4 2-5-3-6-4 1-4-1z" fill="#d3e8f5"/><circle cx="6" cy="20" r="2.500" fill="#d84b4b"/><circle cx="11" cy="14" r="3" fill="#4aa94a"/><circle cx="18" cy="11" r="3" fill="#efb934"/><circle cx="13.500" cy="22" r="2.500"/><path d="M17 35l9-26 3 1-9 24z" fill="#d68c45"/><path d="M25 1q4 1 8 0 0 5-4 9l-3-1q-1-4-1-8z" fill="#c89b6a"/></svg></button>
<button class="tb run" aria-label="设备"><svg width="34" height="34" viewBox="0 0 34 34"><path d="M12 5l10-4 11 3v18l-11 8-10-5z" fill="#b5b5b5"/><path d="M12 5l10-4 11 3-9 4z" fill="#dedede"/><path d="M12 6l10 3v15l-10-3z" fill="#3a3f3b"/><path d="M15 10l4 1v4l-4-1z" fill="#247b3b"/><path d="M1 19l6-3 13 3v10l-6 5-13-5z" fill="#cfcfcf"/><path d="M4 22v4M11 24v4" stroke="#333" stroke-width="3"/></svg></button>
<button class="tb run" aria-label="设置"><svg width="28" height="28" viewBox="0 0 28 28"><circle cx="14" cy="14" r="8.500" fill="none" stroke="#fff" stroke-width="4"/><circle cx="14" cy="14" r="12" fill="none" stroke="#fff" stroke-width="4" stroke-dasharray="4.700 4.725"/></svg></button>
<button class="tb run" aria-label="Lenovo"><svg width="37" height="37" viewBox="0 0 37 37"><path d="M0 0h37v37H0z" fill="#21a7d9"/><path d="M13 10L8 31l14-3z" fill="#17417e"/><path d="M15 6v19h13" fill="none" stroke="#fff" stroke-width="5"/></svg></button>
</div>
<div class="d-flex align-items-center ms-auto">
<div class="batt">72%</div>
<svg class="ms-2 me-2" width="16" height="22" viewBox="0 0 16 22"><path d="M5 1v7M11 1v7" stroke="#fff" stroke-width="3"/><path d="M2 7h12v4q0 5-4 6v4H7v-4q-5-1-5-6z" fill="#fff"/></svg>
<div class="cpu">47℃<br>CPU温度</div>
<button class="tray" aria-label="人脉"><svg width="25" height="26" viewBox="0 0 25 26"><g fill="none" stroke="#fff" stroke-width="2"><circle cx="17" cy="6" r="4"/><path d="M13 11q8-3 10 6"/><circle cx="8" cy="15" r="4"/><path d="M2 25q1-6 6-6t6 6"/></g></svg></button>
<div class="tray-mid d-flex">
<button class="tray" aria-label="显示隐藏的图标"><svg width="20" height="11" viewBox="0 0 20 11"><path d="M1 10l9-9 9 9" fill="none" stroke="#fff" stroke-width="1.500"/></svg></button>
<button class="tray" aria-label="电源"><svg width="24" height="16" viewBox="0 0 24 16"><path d="M8 3.500h14.500v11.500H4v-4" fill="none" stroke="#fff" stroke-width="1.300"/><path d="M8 5h9v8H6v-3z" fill="#fff"/><path d="M23.500 7v5" stroke="#fff"/><path d="M.7 3h7v3q0 3-3.500 3T.7 6zM2.500 0v3M6 0v3M4 9v4" fill="#000" stroke="#fff" stroke-width="1.200"/></svg></button>
<button class="tray" aria-label="网络"><svg width="18" height="18" viewBox="0 0 18 18"><path d="M1 18A17 17 0 0 1 18 1M5.500 18A12.500 12.500 0 0 1 18 5.500M10 18a8 8 0 0 1 8-8" fill="none" stroke="#ccc" stroke-width="1.300"/><circle cx="16" cy="16" r="1.800" fill="#fff"/></svg></button>
</div>
<button class="tray" aria-label="Windows Ink"><svg width="34" height="34" viewBox="0 0 34 34"><path d="M12 31l2-10L25 3q2-2 4 0t0 4L18 26zM15 14l5-9q2-3 6-2M9 20q-8 1-7 7 1 5 7 4l3-1M25 13q8 1 7 5-2 4-8 2" fill="none" stroke="#fff" stroke-width="2"/></svg></button>
<button class="tray ime" aria-label="输入法">A</button>
<button class="tray" aria-label="百度输入法"><svg width="24" height="24" viewBox="0 0 24 24"><rect width="24" height="24" rx="3" fill="#0f9df5"/><text x="12" y="19" text-anchor="middle" font-family="Liberation Sans" font-style="italic" font-size="19" fill="#fff">du</text></svg></button>
<div class="clock">15:58<br>2018/1/14</div>
<button class="tray tray-note" aria-label="通知"><svg width="24" height="24" viewBox="0 0 24 24"><path d="M.7.700h22.600v18H15l-4 4-4-4H.7z" fill="none" stroke="#fff" stroke-width="1.400"/></svg></button>
<button class="peek" aria-label="显示桌面"></button>
</div>
</footer>

<div class="wall-mark d-flex justify-content-between"><span>51</span><span>NB</span><span>K.K</span></div>
<div class="corner-mark">51nb.com</div>
<div class="float-ball">28</div>
<div class="float-meter"></div>
</div>
</body>
</html>
